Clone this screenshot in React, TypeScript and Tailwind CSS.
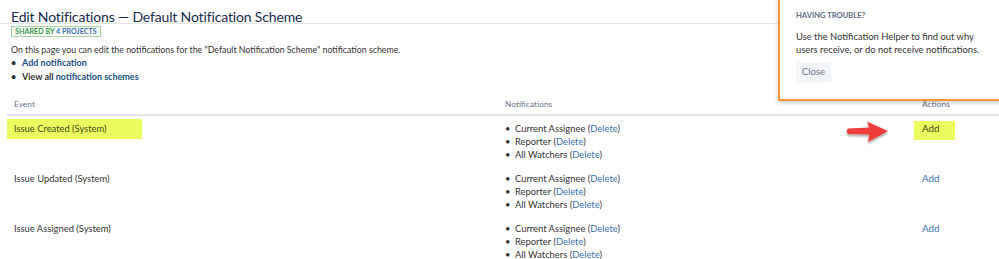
import React from 'react'

const rows = ['Issue Created (System)', 'Issue Updated (System)', 'Issue Assigned (System)']
const recipients = ['Current Assignee', 'Reporter', 'All Watchers']

function Arrow() {
  return (
    <svg width="50" height="30" viewBox="0 0 50 30" className="absolute left-[844px] top-[118px]">
      <defs>
        <filter id="sh" x="-20%" y="-20%" width="140%" height="160%">
          <feDropShadow dx="0" dy="2" stdDeviation="1.3" floodColor="#000" floodOpacity="0.35" />
        </filter>
      </defs>
      <path
        filter="url(#sh)"
        d="M4 10.5 L25 9.5 Q24 6 23 3.5 L44 13 L24 24 Q25 20 25 16.5 L4 16 Q1.5 13 4 10.5 Z"
        fill="#ef3e3b"
      />
    </svg>
  )
}

export default function App() {
  return (
    <div
      className="relative w-[999px] h-[259px] overflow-hidden bg-white text-[#333333]"
      style={{ fontFamily: 'Lato, "Open Sans", sans-serif' }}
    >
      {/* page header */}
      <div className="h-[24px] border-b border-[#e4e5e7]">
        <h1 className="pl-[11px] pt-[8px] text-[14px] leading-[18px] tracking-[-0.15px] text-[#172b4d]">
          Edit Notifications — Default Notification Scheme
        </h1>
      </div>
      <div className="ml-[11px] mt-[2px] flex w-fit items-center h-[11px] px-[3px] border border-[#a6d8a6] text-[7.2px] font-bold leading-none">
        <span className="text-[#2f9a3d]">SHARED BY&nbsp;</span>
        <span className="text-[#3572b0]">4 PROJECTS</span>
      </div>

      <p className="pl-[11px] mt-[6px] text-[8.8px] leading-[13px]">
        On this page you can edit the notifications for the "Default Notification Scheme" notification scheme.
      </p>
      <ul className="pl-[11px] text-[9px] leading-[14px] font-bold">
        <li className="flex">
          <span className="w-[11px] text-[#333]">•</span>
          <span className="text-[#205081]">Add notification</span>
        </li>
        <li className="flex">
          <span className="w-[11px] text-[#333]">•</span>
          <span>
            View all <span className="text-[#205081]">notification schemes</span>
          </span>
        </li>
      </ul>

      {/* notification table */}
      <div className="pl-[7px] mt-[11px]">
        <div className="flex h-[21px] items-center border-b-2 border-[#e4e6ea] text-[8.4px] text-[#6b778c]">
          <div className="w-[491px] pl-[7px]">Event</div>
          <div className="w-[417px] pl-[7px]">Notifications</div>
          <div className="pl-[7px]">Actions</div>
        </div>
        {rows.map((name, i) => (
          <div key={name} className="flex h-[50px] text-[9.4px] leading-[13px]">
            <div className={`w-[491px] ${i === 0 ? 'pt-[3px]' : 'pt-[6px]'}`}>
              <div className={`w-[135px] pl-[7px] ${i === 0 ? 'bg-[#ecfb5e] pt-[3px] pb-[4px] text-[#3f4a22]' : ''}`}>
                {name}
              </div>
            </div>
            <div className="w-[417px] pl-[7px] pt-[6px]">
              {recipients.map(r => (
                <div key={r} className="flex">
                  <span className="w-[10px]">•</span>
                  <span>
                    {r} (<span className="text-[#3b73af]">Delete</span>)
                  </span>
                </div>
              ))}
            </div>
            <div className="pt-[5px]">
              <div
                className={`w-[41px] ml-[-1px] pl-[8px] text-[9.8px] ${
                  i === 0 ? 'bg-[#ecfb5e] pt-[1px] pb-[5px] text-[#3f4a22]' : 'pt-[1px] text-[#3b73af]'
                }`}
              >
                Add
              </div>
            </div>
          </div>
        ))}
      </div>

      <Arrow />

      {/* notification helper popup */}
      <div className="absolute left-[778px] top-[-10px] w-[240px] h-[111px] border-2 border-[#f6963c] bg-white shadow-[0_2px_4px_rgba(0,0,0,0.2)] pl-[16px] pt-[18px] whitespace-nowrap">
        <div className="text-[7.6px] font-bold text-[#5e6c84] leading-[10px]">HAVING TROUBLE?</div>
        <div className="mt-[10px] text-[9.4px] leading-[13px] text-[#333]">
          Use the Notification Helper to find out why
          <br />
          users receive, or do not receive notifications.
        </div>
        <button className="mt-[6px] h-[21px] w-[35px] bg-[#f4f5f7] rounded-[2px] text-[9.6px] text-[#6b778c]">
          Close
        </button>
      </div>
    </div>
  )
}
